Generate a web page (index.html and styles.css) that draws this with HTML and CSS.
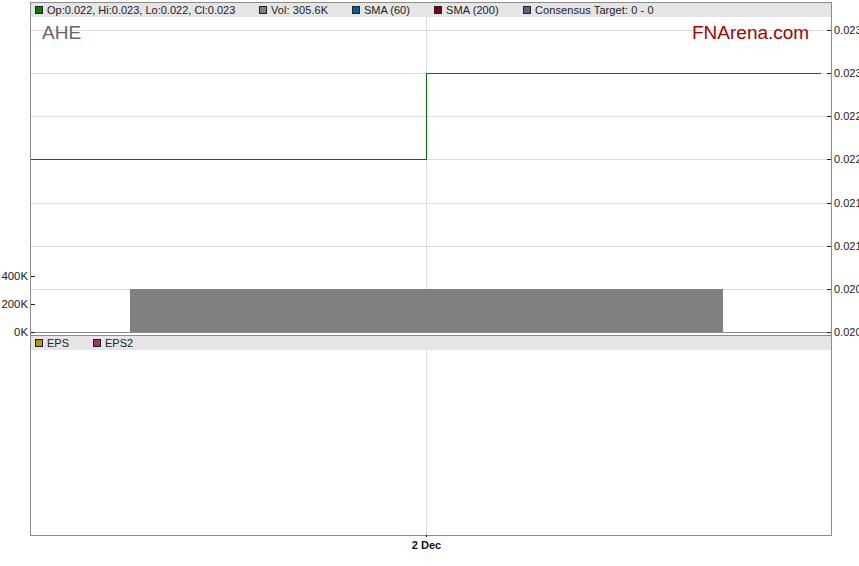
FILE: index.html
```html
<!DOCTYPE html>
<html lang="en">
<head>
<meta charset="utf-8">
<title>AHE chart</title>
<link rel="stylesheet" href="styles.css">
</head>
<body>
<svg class="chart" width="859" height="566" viewBox="0 0 859 566" xmlns="http://www.w3.org/2000/svg">
  <rect class="band" x="30" y="3" width="801" height="14"/>
  <rect class="band" x="30" y="336" width="801" height="14"/>

  <g class="grid">
    <rect x="31" y="30" width="796" height="1"/>
    <rect x="31" y="73" width="796" height="1"/>
    <rect x="31" y="116" width="796" height="1"/>
    <rect x="31" y="159" width="796" height="1"/>
    <rect x="31" y="203" width="796" height="1"/>
    <rect x="31" y="246" width="796" height="1"/>
    <rect x="31" y="289" width="796" height="1"/>
    <rect x="426" y="17" width="1" height="315"/>
    <rect x="426" y="350" width="1" height="185"/>
  </g>

  <rect class="vol" x="130" y="289" width="593" height="43"/>
  <path class="price" d="M31 159.5H426.5V73.5H821"/>

  <g class="frame">
    <rect x="30" y="2" width="802" height="1"/>
    <rect x="30" y="332" width="802" height="1"/>
    <rect x="30" y="335" width="802" height="1"/>
    <rect x="30" y="535" width="802" height="1"/>
    <rect x="30" y="2" width="1" height="534"/>
    <rect x="831" y="2" width="1" height="534"/>
  </g>

  <g class="tick">
    <rect x="827" y="30" width="4" height="1"/>
    <rect x="827" y="73" width="4" height="1"/>
    <rect x="827" y="116" width="4" height="1"/>
    <rect x="827" y="159" width="4" height="1"/>
    <rect x="827" y="203" width="4" height="1"/>
    <rect x="827" y="246" width="4" height="1"/>
    <rect x="827" y="289" width="4" height="1"/>
    <rect x="827" y="332" width="4" height="1"/>
    <rect x="31" y="276" width="4" height="1"/>
    <rect x="31" y="304" width="4" height="1"/>
    <rect x="31" y="332" width="4" height="1"/>
    <rect x="426" y="535" width="1" height="2"/>
  </g>

  <g class="swatches">
    <rect x="35.5" y="6.5" width="7" height="7" class="s-green"/>
    <rect x="259.5" y="6.5" width="7" height="7" class="s-grey"/>
    <rect x="352.5" y="6.5" width="7" height="7" class="s-blue"/>
    <rect x="434.5" y="6.5" width="7" height="7" class="s-maroon"/>
    <rect x="523.5" y="6.5" width="7" height="7" class="s-slate"/>
    <rect x="35.5" y="339.5" width="7" height="7" class="s-gold"/>
    <rect x="93.5" y="339.5" width="7" height="7" class="s-plum"/>
  </g>

  <g class="legend">
    <text x="47" y="14">Op:0.022, Hi:0.023, Lo:0.022, Cl:0.023</text>
    <text class="wide" x="271" y="14">Vol: 305.6K</text>
    <text x="364" y="14">SMA (60)</text>
    <text class="wide" x="446" y="14">SMA (200)</text>
    <text class="wide" x="535" y="14">Consensus Target: 0 - 0</text>
    <text x="47" y="347">EPS</text>
    <text x="105" y="347">EPS2</text>
  </g>

  <text class="symbol" x="42" y="39">AHE</text>
  <text class="brand" x="692" y="39">FNArena.com</text>

  <g class="axis">
    <text x="834" y="34">0.023</text>
    <text x="834" y="77">0.023</text>
    <text x="834" y="120">0.022</text>
    <text x="834" y="163">0.022</text>
    <text x="834" y="207">0.021</text>
    <text x="834" y="250">0.021</text>
    <text x="834" y="293">0.020</text>
    <text x="834" y="336">0.020</text>
  </g>
  <g class="axis axis-left">
    <text x="28" y="280">400K</text>
    <text x="28" y="308">200K</text>
    <text x="28" y="336">0K</text>
  </g>
  <text class="date" x="426.5" y="549">2 Dec</text>
</svg>
</body>
</html>
```
FILE: styles.css
```css
html, body {
  margin: 0;
  padding: 0;
  background: #fff;
  overflow: hidden;
}
.chart {
  display: block;
  font-family: "Liberation Sans", Arial, sans-serif;
}
.band { fill: #e5e5e5; }
.grid rect { fill: #dcdcdc; }
.vol { fill: #808080; }
.price {
  fill: none;
  stroke: #007000;
  stroke-width: 1;
  shape-rendering: crispEdges;
}
.frame rect { fill: #8c8c8c; }
.tick rect { fill: #222; }
.swatches rect { stroke: #222; stroke-width: 1; }
.s-green { fill: #008000; }
.s-grey { fill: #808080; }
.s-blue { fill: #0060a0; }
.s-maroon { fill: #800020; }
.s-slate { fill: #606090; }
.s-gold { fill: #b89600; }
.s-plum { fill: #a03070; }
.legend text { font-size: 11px; fill: #222; }
.legend .wide { letter-spacing: 0.09px; }
.symbol { font-size: 19px; fill: #666; }
.brand { font-size: 19px; fill: #aa0000; }
.axis text { font-size: 11px; fill: #222; }
.axis-left text { font-size: 11.4px; text-anchor: end; }
.date { font-size: 11px; font-weight: 700; fill: #111; text-anchor: middle; }
```
